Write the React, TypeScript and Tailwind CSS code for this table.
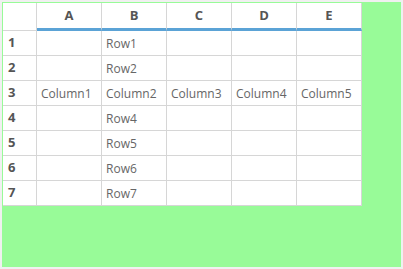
const cols = ['A', 'B', 'C', 'D', 'E']

const rows: string[][] = [
  ['', 'Row1', '', '', ''],
  ['', 'Row2', '', '', ''],
  ['Column1', 'Column2', 'Column3', 'Column4', 'Column5'],
  ['', 'Row4', '', '', ''],
  ['', 'Row5', '', '', ''],
  ['', 'Row6', '', '', ''],
  ['', 'Row7', '', '', ''],
]

export default function App() {
  return (
    <div className="w-[403px] h-[269px] bg-[#f0f0f0] p-[2px] font-['Open_Sans',sans-serif]">
      <div className="w-full h-full bg-[#98fb98] pl-[1px] pt-[1px]">
        <div className="grid grid-cols-[34px_repeat(5,65px)] bg-white w-fit text-[12px]">
          {/* header */}
          <div className="h-[28px] border-r border-b border-[#d6d6d6]" />
          {cols.map((c) => (
            <div
              key={c}
              className="h-[28px] border-r border-[#d6d6d6] border-b-[3px] border-b-[#5ba3d6] flex items-center justify-center font-bold text-[13px] text-[#555]"
            >
              {c}
            </div>
          ))}

          {rows.map((r, i) => (
            <div key={i} className="contents">
              <div className="h-[25px] border-r border-b border-[#d6d6d6] flex items-center pl-[5px] font-bold text-[13px] text-[#555]">
                {i + 1}
              </div>
              {r.map((v, j) => (
                <div
                  key={j}
                  className="h-[25px] border-r border-b border-[#d6d6d6] flex items-center pl-[4px] pt-[1px] text-[#666]"
                >
                  {v}
                </div>
              ))}
            </div>
          ))}
        </div>
      </div>
    </div>
  )
}
